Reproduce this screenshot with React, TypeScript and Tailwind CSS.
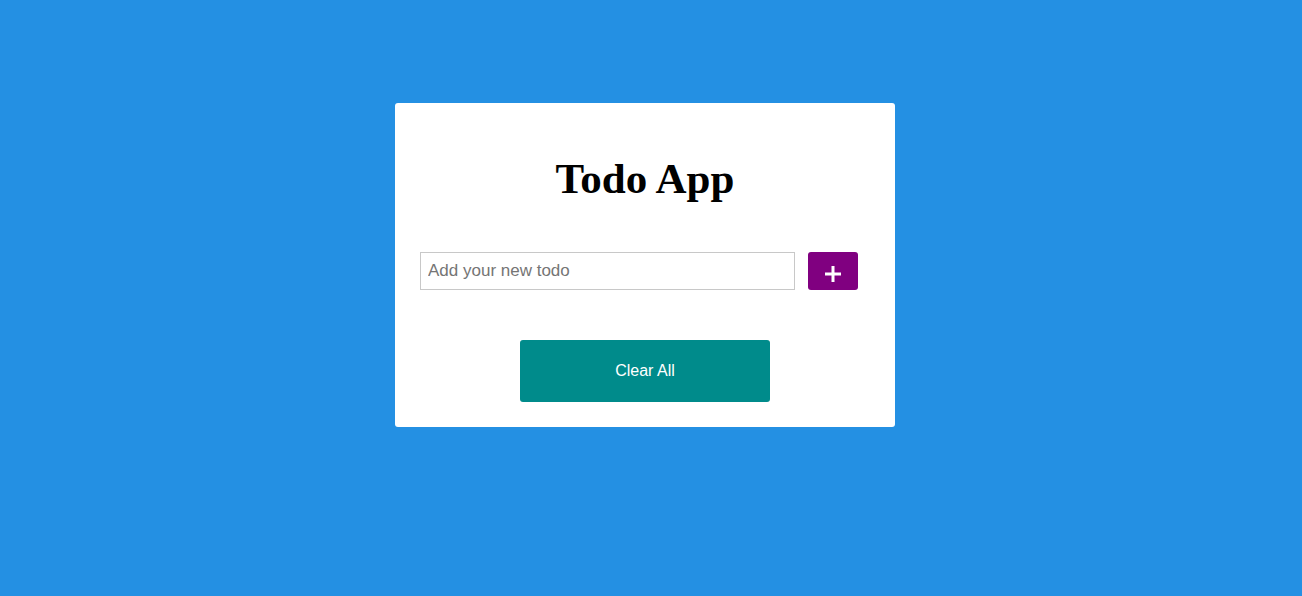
export default function App() {
  return (
    <div className="min-h-[596px] w-full bg-[#2490e3] pt-[103px]">
      <div className="ml-[395px] w-[500px] rounded-[3px] bg-white px-[25px] pb-[25px] pt-[48px]">
        <h1 className="text-center font-['Liberation_Serif',serif] text-[43px] font-bold leading-[56px] text-black">
          Todo App
        </h1>
        <div className="mt-[45px] flex items-center gap-[13px]">
          <input
            type="text"
            placeholder="Add your new todo"
            className="h-[38px] w-[375px] border border-[#c8c8c8] px-[7px] font-['Liberation_Sans',Arial,sans-serif] text-[17px] text-black outline-none placeholder:text-[#757575]"
          />
          <button className="flex h-[38px] w-[50px] items-center justify-center rounded-[3px] bg-[#800080] pt-[5px]">
            <svg width="18" height="18" viewBox="0 0 18 18">
              <path d="M9 1v16M1 9h16" stroke="white" strokeWidth="3" />
            </svg>
          </button>
        </div>
        <div className="mt-[50px] flex justify-center">
          <button className="h-[62px] w-[250px] rounded-[3px] bg-[#008b8b] font-['Liberation_Sans',Arial,sans-serif] text-[16px] text-white">
            Clear All
          </button>
        </div>
      </div>
    </div>
  );
}
